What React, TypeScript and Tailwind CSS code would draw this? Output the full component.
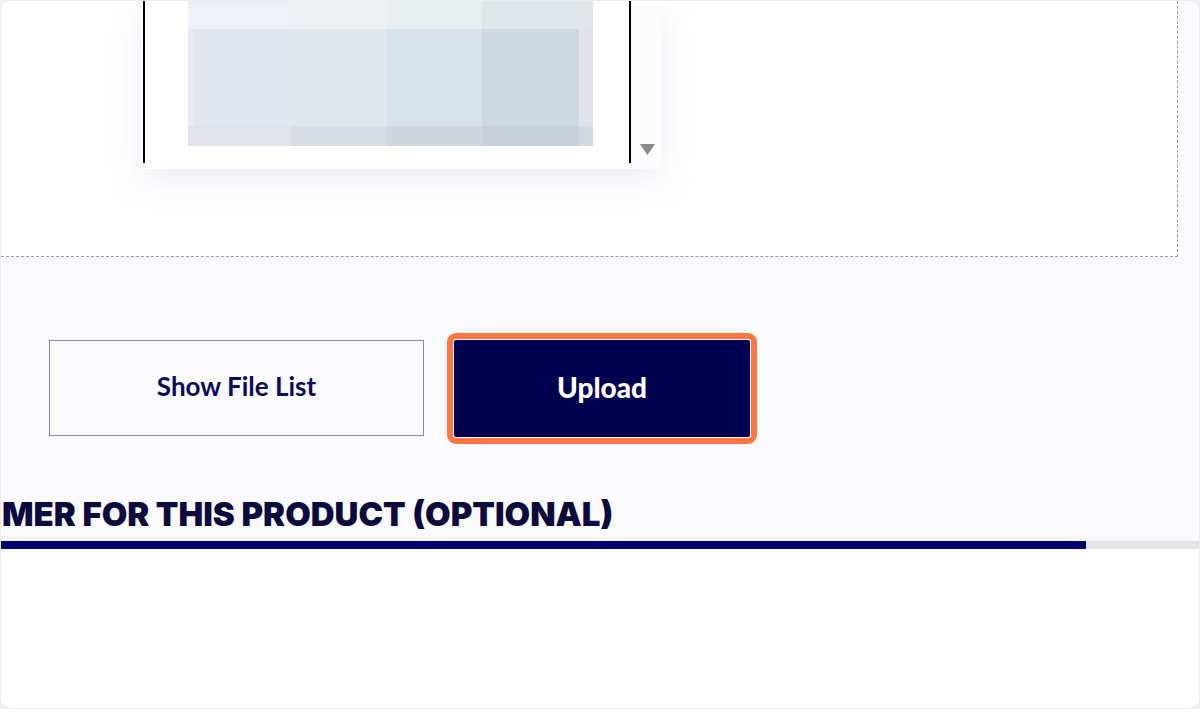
import React from "react";

const mosaic = [
  ["#eef0f5", "#eef0f5", "#edf0f3", "#e8eef0", "#e0e5ea", "#e2e5e8"],
  ["#e8ebf1", "#e2e6ee", "#e1e5ec", "#d6e1e9", "#ccd9e3", "#dfe2e8"],
  ["#e0e3ea", "#e0e3ea", "#d8dce4", "#d0d6e0", "#c9d0dd", "#d4d8e2"],
];
const colW = [6, 97, 96, 95, 97, 14];
const rowH = [28, 97, 20];

function Preview() {
  return (
    <div className="ml-[140px] flex h-[168px] w-[520px] bg-white shadow-[0_10px_30px_rgba(200,200,225,0.35)]">
      <div className="ml-[2px] h-[162px] w-[2px] bg-black" />
      <div className="ml-[43px] flex h-[145px] flex-col">
        {mosaic.map((row, r) => (
          <div key={r} className="flex" style={{ height: rowH[r] }}>
            {row.map((c, i) => (
              <div key={i} style={{ width: colW[i], background: c }} />
            ))}
          </div>
        ))}
      </div>
      <div className="ml-[36px] h-[162px] w-[2px] bg-black" />
      <div className="flex flex-1 flex-col bg-[#fbfbfc] pl-[8px] pt-[142px]">
        <svg width="17" height="13" viewBox="0 0 17 13">
          <path d="M1 1h15l-7.5 11z" fill="#8a8a8a" />
        </svg>
      </div>
    </div>
  );
}

export default function App() {
  return (
    <div className="h-[709px] w-[1200px] overflow-hidden bg-[#f0f0f4]">
      <div className="flex h-[709px] w-[1200px] flex-col overflow-hidden rounded-[10px] border border-[#ebebf0] bg-[#f9f9fb]" style={{ fontFamily: "Lato, 'Liberation Sans', sans-serif" }}>
        <div className="h-[256px] w-[1177px] shrink-0 border-b border-r border-dashed border-[#9a9aa6] bg-white">
          <Preview />
        </div>

        <div className="mt-[83px] flex gap-[30px] pl-[48px]">
          <button className="flex h-[96px] w-[375px] items-center justify-center border border-[#8686c6] bg-[#fbfbfd] pb-[3px] text-[26px] font-bold text-[#0b0b5e]">
            Show File List
          </button>
          <button className="flex h-[97px] w-[296px] items-center justify-center rounded-[2px] bg-[#000050] pb-[3px] text-[28px] font-black text-white outline-[6px] outline-offset-[1px] outline-[#ff7643]">
            Upload
          </button>
        </div>

        <div className="mt-[56px] pl-[1px]">
          <h2 className="whitespace-nowrap text-[33px] leading-[42px] font-black text-[#0b0b3d]" style={{ fontFamily: "Inter, 'Liberation Sans', sans-serif" }}>
            MER FOR THIS PRODUCT (OPTIONAL)
          </h2>
        </div>

        <div className="mt-[6px] flex h-[8px] shrink-0">
          <div className="w-[1085px] bg-[#00006e]" />
          <div className="flex-1 bg-[#e3e3e8]" />
        </div>
        <div className="flex-1 bg-white" />
      </div>
    </div>
  );
}
